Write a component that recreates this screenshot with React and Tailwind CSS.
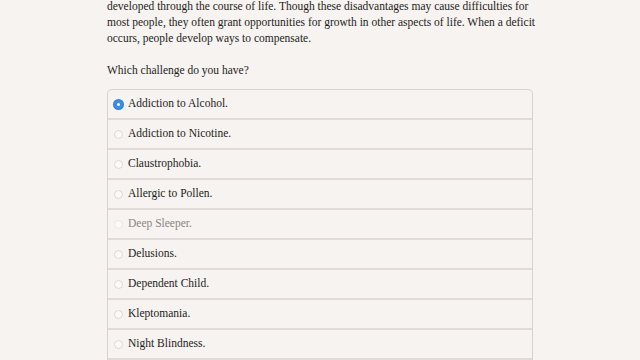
import React from 'react'

const options = [
    { label: 'Addiction to Alcohol.', checked: true },
    { label: 'Addiction to Nicotine.' },
    { label: 'Claustrophobia.' },
    { label: 'Allergic to Pollen.' },
    { label: 'Deep Sleeper.', disabled: true },
    { label: 'Delusions.' },
    { label: 'Dependent Child.' },
    { label: 'Kleptomania.' },
    { label: 'Night Blindness.' },
]

const App = () => {
    return (
        <div className="w-[640px] h-[360px] overflow-hidden bg-[#f6f3f0] text-[#1e1c1a] font-['Liberation_Serif',serif]">
            <div className="w-[426px] ml-[107px] -mt-[2px]">
                {/* Intro */}
                <p className="text-[11.5px] leading-[16px] whitespace-nowrap">
                    developed through the course of life. Though these disadvantages may cause difficulties for<br />
                    most people, they often grant opportunities for growth in other aspects of life. When a deficit<br />
                    occurs, people develop ways to compensate.
                </p>
                <p className="text-[11.5px] leading-[16px] mt-[16px]">Which challenge do you have?</p>

                {/* Choices (list continues below the fold) */}
                <div className="mt-[11px] border-x border-t border-[#d9d3cd] rounded-t-[5px]">
                    {options.map((o, i) => (
                        <label
                            key={o.label}
                            className={`flex items-center gap-[5px] pl-[6px] text-[11.5px] border-b-2 border-[#e0dbd6] h-[30px] ${i === 0 ? 'h-[30px]' : ''} ${o.disabled ? 'text-[#8a8580]' : ''}`}
                        >
                            {o.checked ? (
                                <span className="w-[9px] h-[9px] rounded-full bg-[#3b8ee8] flex items-center justify-center shadow-[0_0_0_1px_#2f7fd6]">
                                    <span className="w-[3px] h-[3px] rounded-full bg-white" />
                                </span>
                            ) : (
                                <span className={`w-[9px] h-[9px] rounded-full bg-[#fbfaf9] border ${o.disabled ? 'border-[#ebe7e3]' : 'border-[#dcd7d2]'}`} />
                            )}
                            <span>{o.label}</span>
                        </label>
                    ))}
                </div>
            </div>
        </div>
    )
}

export default App
